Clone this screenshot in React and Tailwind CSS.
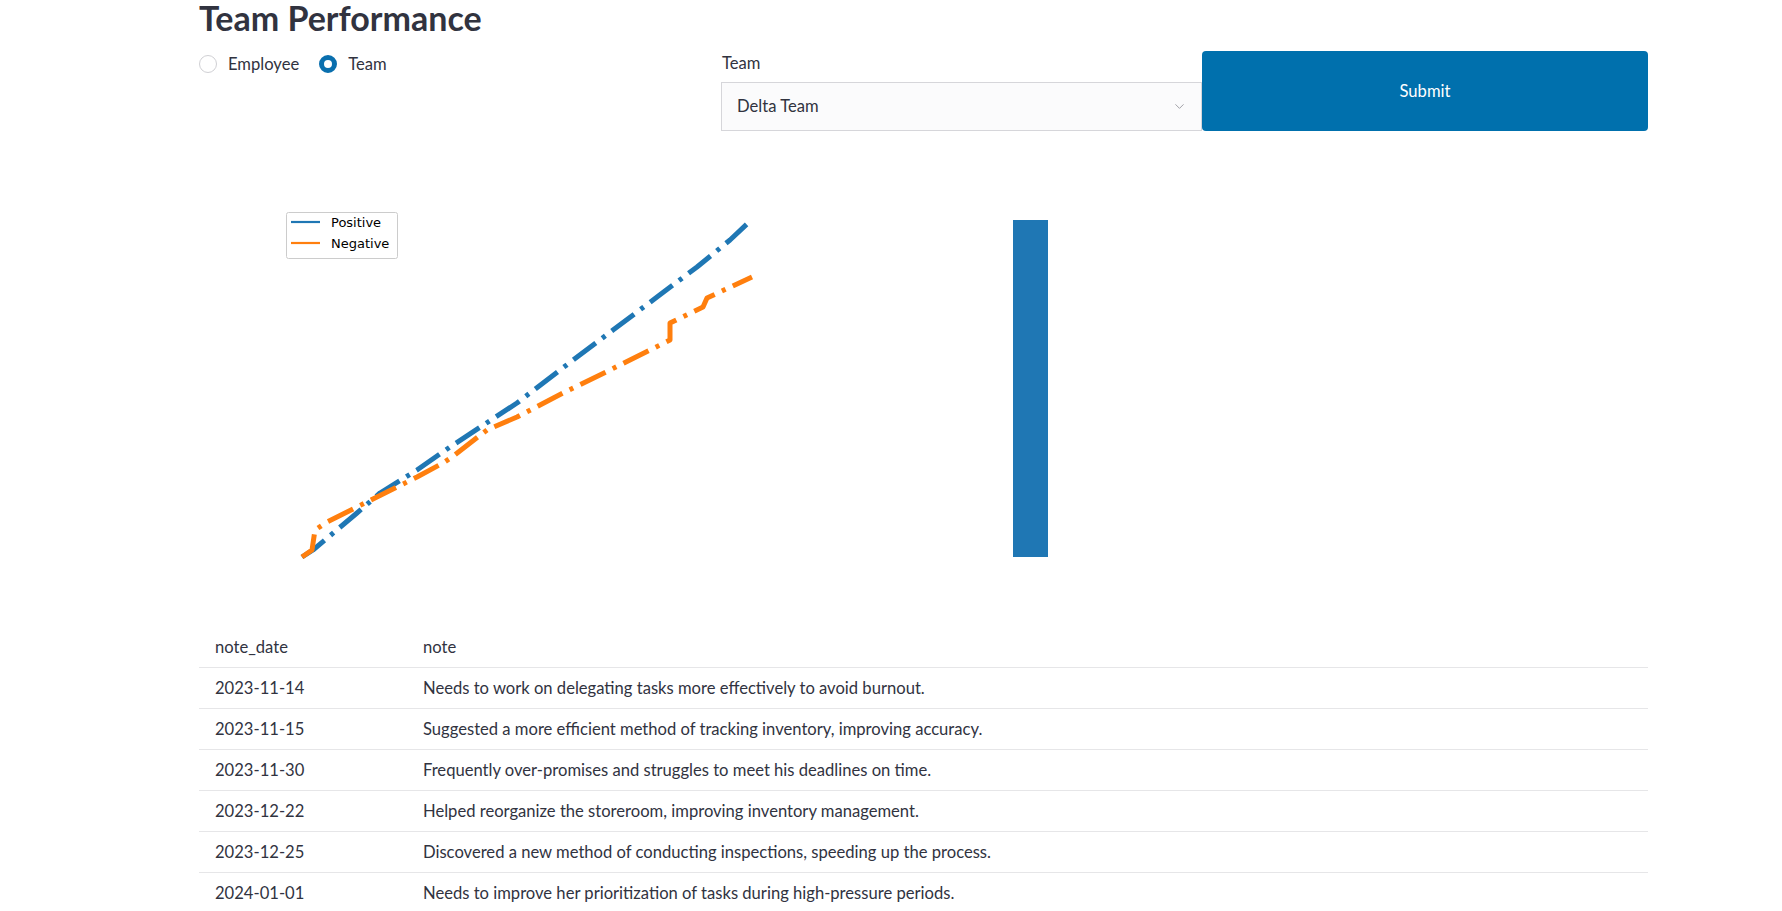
import React from "react";
import { ChevronDown } from "lucide-react";

const rows = [
  ["2023-11-14", "Needs to work on delegating tasks more effectively to avoid burnout."],
  ["2023-11-15", "Suggested a more efficient method of tracking inventory, improving accuracy."],
  ["2023-11-30", "Frequently over-promises and struggles to meet his deadlines on time."],
  ["2023-12-22", "Helped reorganize the storeroom, improving inventory management."],
  ["2023-12-25", "Discovered a new method of conducting inspections, speeding up the process."],
  ["2024-01-01", "Needs to improve her prioritization of tasks during high-pressure periods."],
];

// points in page coords, shifted into the chart box (left 199, top 131)
const toLocal = (pts) => pts.map(([x, y]) => `${x - 199},${y - 131}`).join(" ");

const positive = toLocal([
  [302, 557], [313, 550], [357, 513], [380, 493], [417, 470], [450, 447],
  [517, 403], [560, 370], [613, 330], [657, 297], [697, 267], [730, 240], [748, 223],
]);

const negative = toLocal([
  [302, 557], [312, 550], [315, 530], [327, 522], [367, 502], [417, 477],
  [443, 463], [452, 457], [487, 430], [517, 417], [563, 393], [610, 370],
  [670, 340], [670, 323], [703, 307], [707, 298], [752, 277],
]);

function LineChart() {
  return (
    <svg width="724" height="496" viewBox="0 0 724 496" className="block">
      <polyline points={positive} fill="none" stroke="#1f77b4" strokeWidth="5" strokeDasharray="28 8 4 8" strokeLinejoin="round" />
      <polyline points={negative} fill="none" stroke="#ff7f0e" strokeWidth="5" strokeDasharray="28 8 4 8" strokeLinejoin="round" />
      {/* legend */}
      <rect x="87.5" y="81.5" width="111" height="46" rx="2" fill="white" fillOpacity="0.8" stroke="#cccccc" />
      <line x1="92" y1="91" x2="121" y2="91" stroke="#1f77b4" strokeWidth="2.2" />
      <line x1="92" y1="112" x2="121" y2="112" stroke="#ff7f0e" strokeWidth="2.2" />
      <text x="132" y="96" fontSize="13" fill="#000" style={{ fontFamily: "'DejaVu Sans', sans-serif" }}>Positive</text>
      <text x="132" y="117" fontSize="13" fill="#000" style={{ fontFamily: "'DejaVu Sans', sans-serif" }}>Negative</text>
    </svg>
  );
}

function BarChart() {
  return (
    <svg width="725" height="496" viewBox="0 0 725 496" className="block">
      <rect x="90" y="89" width="35" height="337" fill="#1f77b4" />
    </svg>
  );
}

export default function App() {
  return (
    <div className="w-full h-[911px] overflow-hidden bg-white text-[#31333f]" style={{ fontFamily: "Lato, 'Liberation Sans', sans-serif" }}>
      <div className="w-[1449px] ml-[199px]">
        <h1 className="text-[34px] leading-[40px] font-bold mt-[-2px] h-[53px]">Team Performance</h1>

        <div className="flex h-[80px] text-[16.6px]">
          <div className="w-[522px] flex items-start gap-[14px] pt-[3px]">
            <label className="flex items-center gap-[11px] leading-[20px]">
              <span className="w-[18px] h-[18px] rounded-full border border-[#d0d0d4] bg-white" />
              Employee
            </label>
            <label className="flex items-center gap-[11px] leading-[20px] ml-[6px]">
              <span className="w-[18px] h-[18px] rounded-full border-[5px] border-[#0a6fae] bg-white" />
              Team
            </label>
          </div>

          <div className="w-[481px] flex flex-col">
            <div className="leading-[20px] pt-[2px] h-[31px] pl-[1px]">Team</div>
            <div className="h-[49px] border border-[#d6d6da] bg-[#fbfbfc] flex items-center justify-between pl-[15px] pr-[14px]">
              <span>Delta Team</span>
              <ChevronDown size={15} strokeWidth={1.5} color="#9a9aa0" />
            </div>
          </div>

          <button className="flex-1 h-[80px] bg-[#0070ad] rounded-[4px] text-white flex items-center justify-center">
            Submit
          </button>
        </div>

        <div className="flex">
          <LineChart />
          <BarChart />
        </div>

        <div className="text-[16.6px]">
          <div className="flex items-center h-[40px]">
            <div className="w-[224px] pl-[16px]">note_date</div>
            <div>note</div>
          </div>
          {rows.map(([d, n]) => (
            <div key={d} className="flex items-center h-[41px] border-t border-[#e6e6e8]">
              <div className="w-[224px] pl-[16px]">{d}</div>
              <div>{n}</div>
            </div>
          ))}
        </div>
      </div>
    </div>
  );
}
